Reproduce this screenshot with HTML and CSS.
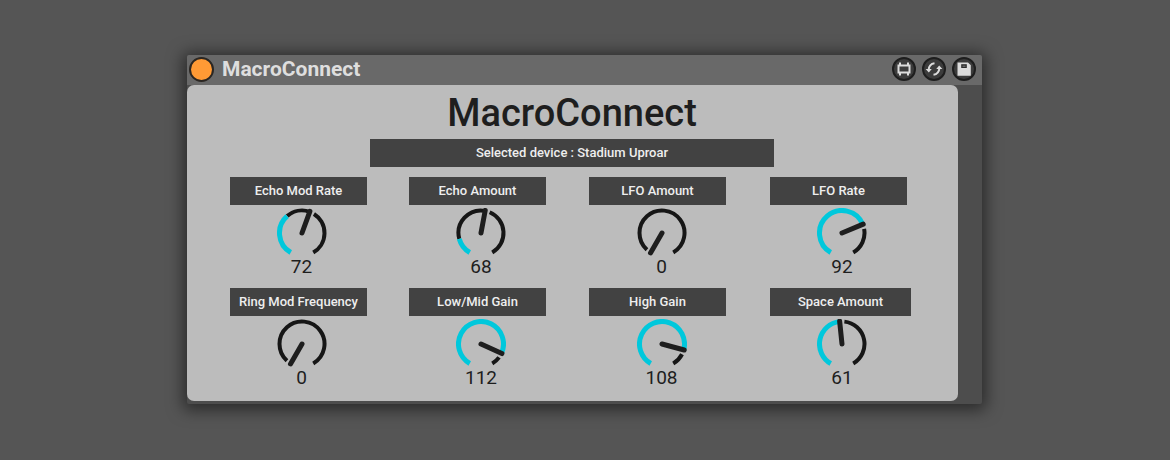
FILE: index.html
```html
<!doctype html>
<html lang="en">
<head>
    <meta charset="UTF-8">
    <meta name="viewport" content="width=device-width, initial-scale=1.0">
    <title>MacroConnect</title>
    <link rel="stylesheet" href="styles.css">
</head>
<body>
    <main class="device">
        <header class="device-bar">
            <button class="power" type="button" aria-label="Device on"></button>
            <span class="device-name">MacroConnect</span>
            <div class="tools">
                <button class="tool" type="button" aria-label="Edit device">
                    <svg viewBox="0 0 24 24">
                        <path d="M6.500 8.500h11v7h-11z" fill="none" stroke="#dcdcdc" stroke-width="2"/>
                        <path d="M8 5.500v3M16 5.500v3M8 15.500v3M16 15.500v3" stroke="#dcdcdc" stroke-width="2"/>
                    </svg>
                </button>
                <button class="tool" type="button" aria-label="Hot-swap">
                    <svg viewBox="0 0 24 24">
                        <path d="M12.500 6.200Q7 7 6.600 13M11.500 17.800Q17 17 17.400 11" fill="none" stroke="#dcdcdc" stroke-width="2"/>
                        <path d="M3.600 12h6.200l-3 3.600zM14.200 12h6.200l-3.200-3.600z" fill="#dcdcdc"/>
                    </svg>
                </button>
                <button class="tool" type="button" aria-label="Save preset">
                    <svg viewBox="0 0 24 24">
                        <path d="M5.500 5.500h10.500l2.800 2.800v10.500h-13.300z" fill="#dcdcdc"/>
                        <path d="M9.200 7.200h5.600v3.800h-5.600z" fill="#2c2c2c"/>
                        <path d="M10.500 8.500h3v1.500h-3z" fill="#666"/>
                    </svg>
                </button>
            </div>
        </header>
        <section class="panel">
            <h1>MacroConnect</h1>
            <p class="selected">Selected device : Stadium Uproar</p>
            <div class="macros">
                <div class="macro">
                    <label class="macro-label" for="m1">Echo Mod Rate</label>
                    <div class="dial"><svg viewBox="0 0 50 50"></svg><input id="m1" type="range" min="0" max="127" value="72" data-mod="46"></div>
                    <output for="m1">72</output>
                </div>
                <div class="macro">
                    <label class="macro-label" for="m2">Echo Amount</label>
                    <div class="dial"><svg viewBox="0 0 50 50"></svg><input id="m2" type="range" min="0" max="127" value="68" data-mod="19"></div>
                    <output for="m2">68</output>
                </div>
                <div class="macro">
                    <label class="macro-label" for="m3">LFO Amount</label>
                    <div class="dial"><svg viewBox="0 0 50 50"></svg><input id="m3" type="range" min="0" max="127" value="0"></div>
                    <output for="m3">0</output>
                </div>
                <div class="macro">
                    <label class="macro-label" for="m4">LFO Rate</label>
                    <div class="dial"><svg viewBox="0 0 50 50"></svg><input id="m4" type="range" min="0" max="127" value="92"></div>
                    <output for="m4">92</output>
                </div>
                <div class="macro">
                    <label class="macro-label" for="m5">Ring Mod Frequency</label>
                    <div class="dial"><svg viewBox="0 0 50 50"></svg><input id="m5" type="range" min="0" max="127" value="0"></div>
                    <output for="m5">0</output>
                </div>
                <div class="macro">
                    <label class="macro-label" for="m6">Low/Mid Gain</label>
                    <div class="dial"><svg viewBox="0 0 50 50"></svg><input id="m6" type="range" min="0" max="127" value="112"></div>
                    <output for="m6">112</output>
                </div>
                <div class="macro">
                    <label class="macro-label" for="m7">High Gain</label>
                    <div class="dial"><svg viewBox="0 0 50 50"></svg><input id="m7" type="range" min="0" max="127" value="108"></div>
                    <output for="m7">108</output>
                </div>
                <div class="macro">
                    <label class="macro-label wide" for="m8">Space Amount</label>
                    <div class="dial"><svg viewBox="0 0 50 50"></svg><input id="m8" type="range" min="0" max="127" value="61"></div>
                    <output for="m8">61</output>
                </div>
            </div>
        </section>
    </main>
    <script>
        // 0 degrees points up, the dial runs from -150 to 150
        function point(deg, r) {
            const a = deg * Math.PI / 180;
            return (25 + r * Math.sin(a)).toFixed(2) + ' ' + (25 - r * Math.cos(a)).toFixed(2);
        }

        function arc(from, to, cls) {
            if (to <= from) return '';
            const large = to - from > 180 ? 1 : 0;
            return `<path class="${cls}" d="M${point(from, 22.5)}A22.5 22.5 0 ${large} 1 ${point(to, 22.5)}"/>`;
        }

        function toDeg(value) {
            return -150 + value / 127 * 300;
        }

        function draw(input) {
            const deg = toDeg(Number(input.value));
            const mod = input.dataset.mod ? toDeg(Number(input.dataset.mod)) : deg;
            input.previousElementSibling.innerHTML =
                arc(mod, deg, 'track') +
                arc(deg + 12, 150, 'track') +
                arc(-150, mod, 'fill') +
                `<path class="needle" d="M25 25L${point(deg, 23)}"/>`;
            input.closest('.macro').querySelector('output').textContent = input.value;
        }

        document.querySelectorAll('.dial input').forEach((input) => {
            draw(input);
            input.addEventListener('input', () => {
                delete input.dataset.mod;
                draw(input);
            });
        });
    </script>
</body>
</html>
```
FILE: styles.css
```css
* {
    margin: 0;
    padding: 0;
    box-sizing: border-box;
}

body {
    min-height: 100vh;
    padding: 55px 188px 55px 187px;
    background: #555;
    color: #1e1e1e;
    font-family: Roboto, "Liberation Sans", sans-serif;
    font-weight: 500;
}

.device {
    padding-bottom: 3px;
    border-radius: 2px;
    background: #4d4d4d;
    box-shadow: 0 2px 16px 4px rgba(0, 0, 0, 0.5);
}

/* title bar */
.device-bar {
    display: flex;
    align-items: center;
    gap: 8px;
    height: 30px;
    padding: 0 6px 2px 2px;
    border-radius: 2px 2px 0 0;
    background: #696969;
}

.power {
    width: 25px;
    height: 25px;
    border: 2px solid #2a2622;
    border-radius: 50%;
    background: #ff9a35;
}

.device-name {
    color: #dedede;
    font-size: 21px;
    font-weight: 700;
    line-height: 24px;
}

.tools {
    display: flex;
    gap: 6px;
    margin-left: auto;
}

.tool {
    width: 24px;
    height: 24px;
    border: 2px solid #1e1e1e;
    border-radius: 50%;
    background: #3c3c3c;
}

.tool svg {
    display: block;
    width: 24px;
    height: 24px;
    margin: -2px;
}

/* panel */
.panel {
    margin-right: 24px;
    padding: 8px 26px 14px 25px;
    border-radius: 7px;
    background: #bcbcbc;
}

h1 {
    font-size: 38px;
    font-weight: 500;
    line-height: 40px;
    text-align: center;
}

.selected {
    width: 56%;
    margin: 6px auto 10px;
    background: #424242;
    color: #eee;
    font-size: 13px;
    line-height: 28px;
    text-align: center;
}

.macros {
    display: grid;
    grid-template-columns: 179fr 180fr 181fr 180fr;
    row-gap: 12px;
}

.macro {
    display: flex;
    flex-direction: column;
    align-items: center;
}

.macro-label {
    align-self: flex-start;
    min-width: 137px;
    margin: 0 0 3px 18px;
    background: #424242;
    color: #eee;
    font-size: 13px;
    line-height: 28px;
    text-align: center;
}

.macro-label.wide {
    min-width: 141px;
}

.dial {
    position: relative;
    width: 50px;
    height: 50px;
}

.dial svg {
    display: block;
}

.dial input {
    position: absolute;
    inset: 0;
    width: 100%;
    height: 100%;
    opacity: 0;
    cursor: pointer;
}

.track,
.fill,
.needle {
    fill: none;
    stroke: #161616;
    stroke-width: 4;
}

.fill {
    stroke: #00c8dc;
    stroke-width: 5;
}

.needle {
    stroke: #1e1e1e;
    stroke-width: 5;
    stroke-linecap: round;
}

output {
    font-size: 19px;
    font-weight: 400;
    line-height: 18px;
}
```
